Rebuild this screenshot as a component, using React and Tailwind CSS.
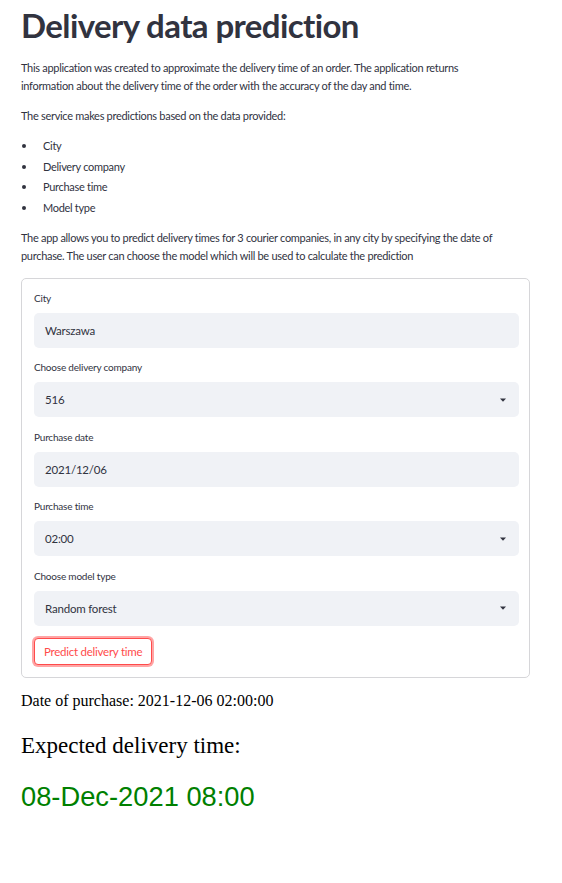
import React from "react";

const Caret = () => (
  <svg width="6" height="4" viewBox="0 0 6 4" className="shrink-0">
    <path d="M0 0.5 H6 L3 3.8 Z" fill="#31333f" />
  </svg>
);

function Field({ label, value, select, first }) {
  return (
    <div className={first ? "" : "mt-[11.5px]"}>
      <div className="h-[16px] leading-[16px] text-[10px] tracking-[-0.2px] text-[#31333f]">{label}</div>
      <div className="mt-[7px] h-[35px] rounded-[5px] bg-[#f0f2f6] flex items-center justify-between pl-[11px] pr-[13px] text-[11.5px] tracking-[-0.2px] text-[#31333f]">
        <span>{value}</span>
        {select && <Caret />}
      </div>
    </div>
  );
}

export default function App() {
  const items = ["City", "Delivery company", "Purchase time", "Model type"];
  return (
    <div className="w-[562px] min-h-[883px] bg-white" style={{ fontFamily: "Lato, 'Noto Sans', sans-serif" }}>
      <div className="ml-[21px] w-[509px] pt-[5px]">
        <h1 className="text-[33px] font-bold leading-[40px] tracking-[-0.6px] text-[#31333f]">Delivery data prediction</h1>
        <div className="w-[490px] text-[11px] leading-[18px] tracking-[-0.3px] text-[#31333f]">
          <p className="mt-[14px]">
            This application was created to approximate the delivery time of an order. The application returns information about the delivery time of the order with the accuracy of the day and time.
          </p>
          <p className="mt-[12px]">The service makes predictions based on the data provided:</p>
          <ul className="mt-[12px]">
            {items.map((t, i) => (
              <li key={t} className={"flex items-center h-[18px] " + (i ? "mt-[2.6px]" : "")}>
                <span className="w-[4px] h-[4px] rounded-full bg-[#31333f] ml-[1px]" />
                <span className="ml-[17px]">{t}</span>
              </li>
            ))}
          </ul>
          <p className="mt-[12px]">
            The app allows you to predict delivery times for 3 courier companies, in any city by specifying the date of purchase. The user can choose the model which will be used to calculate the prediction
          </p>
        </div>
        <form className="mt-[13px] border border-[#d6d6d9] rounded-[5px] pl-[12px] pr-[10px] pt-[11px] pb-[12px]" onSubmit={(e) => e.preventDefault()}>
          <Field first label="City" value="Warszawa" />
          <Field label="Choose delivery company" value="516" select />
          <Field label="Purchase date" value="2021/12/06" />
          <Field label="Purchase time" value="02:00" select />
          <Field label="Choose model type" value="Random forest" select />
          <button
            type="submit"
            className="mt-[12px] h-[27px] px-[9px] rounded-[4px] border border-[#ff4b4b] text-[#ff4b4b] text-[11.5px] tracking-[-0.25px] bg-white shadow-[0_0_0_2px_rgba(255,75,75,0.5)]"
          >
            Predict delivery time
          </button>
        </form>
        <div className="text-black" style={{ fontFamily: "'Liberation Serif', serif" }}>
          <p className="mt-[13px] text-[16px] leading-[20px]">Date of purchase: 2021-12-06 02:00:00</p>
          <p className="mt-[21px] text-[23px] leading-[28px]">Expected delivery time:</p>
        </div>
        <p className="mt-[21px] text-[27.3px] leading-[32px] text-[#008000]" style={{ fontFamily: "'Liberation Sans', Arial, sans-serif" }}>
          08-Dec-2021 08:00
        </p>
      </div>
    </div>
  );
}
